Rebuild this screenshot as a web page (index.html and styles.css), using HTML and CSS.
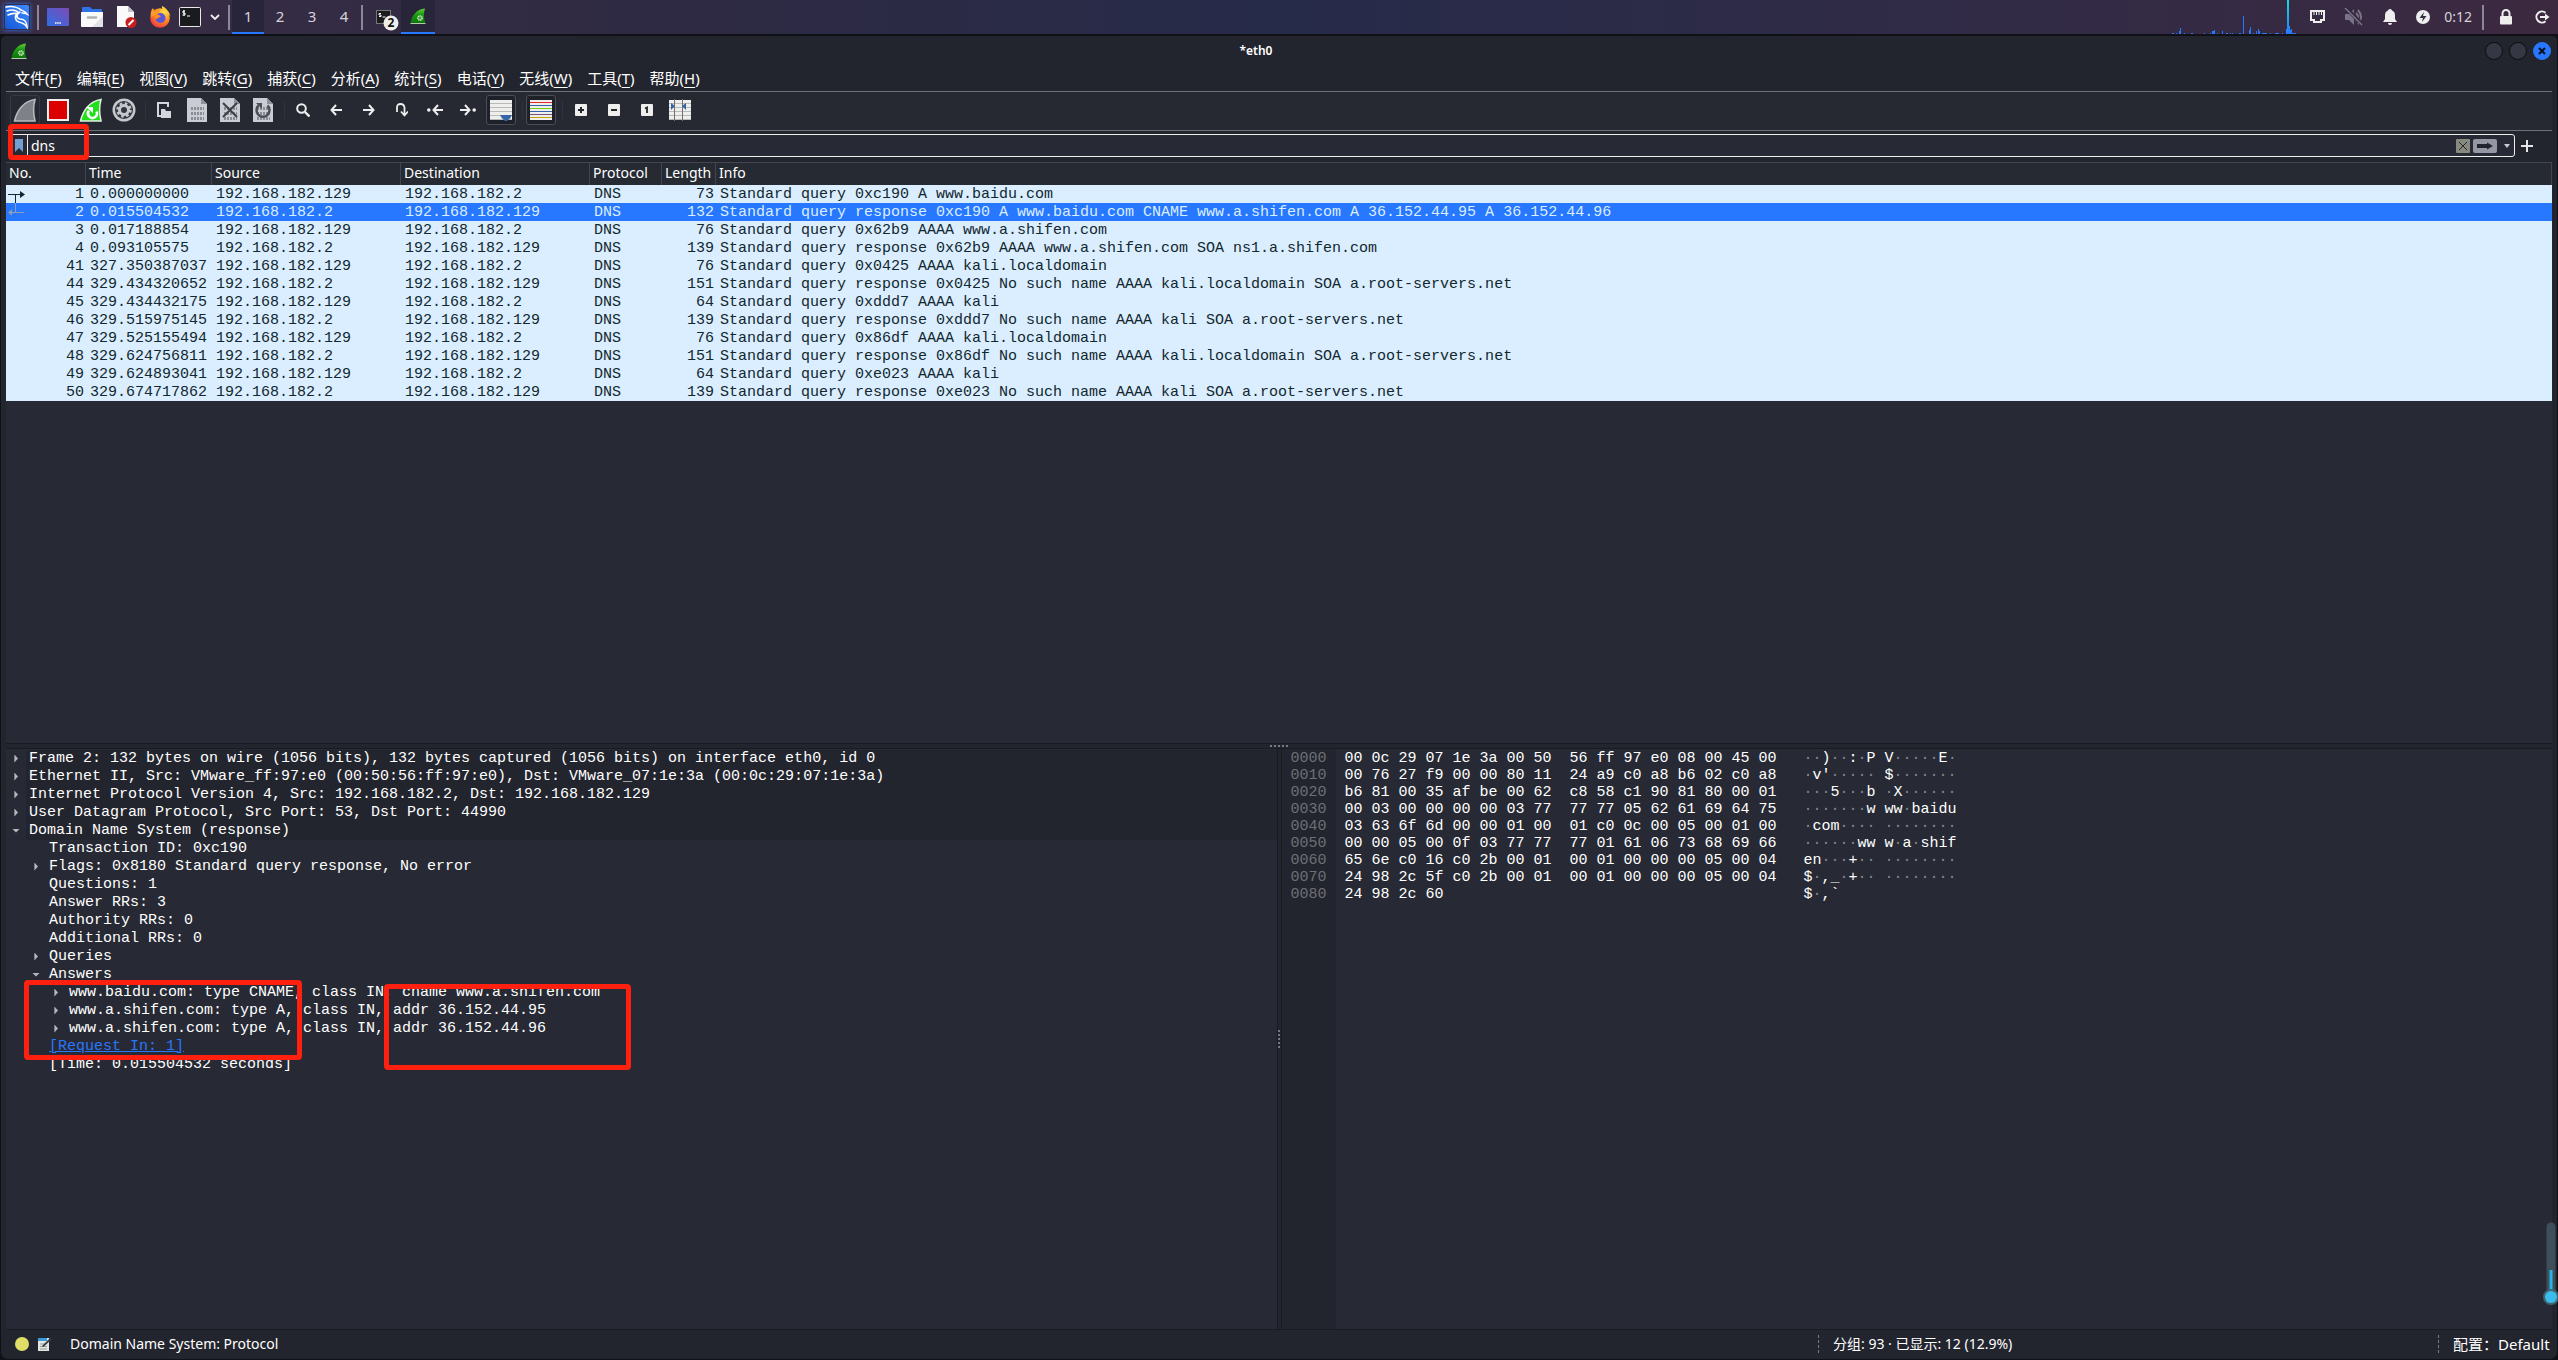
FILE: index.html
```html
<!DOCTYPE html>
<html lang="zh-CN">
<head>
<meta charset="utf-8">
<title>*eth0</title>
<link rel="stylesheet" href="styles.css">
</head>
<body>
<svg class="defs" aria-hidden="true">
  <defs>
    <linearGradient id="finGreen" x1="0" y1="0" x2="0" y2="1"><stop offset="0" stop-color="#5fd03a"/><stop offset=".4" stop-color="#1c9a12"/><stop offset="1" stop-color="#0d7408"/></linearGradient>
    <linearGradient id="kali" x1="0" y1="1" x2="1" y2="0"><stop offset="0" stop-color="#1557d8"/><stop offset="1" stop-color="#3d8bff"/></linearGradient>
    <linearGradient id="desk" x1="0" y1="1" x2="1" y2="0"><stop offset="0" stop-color="#2f6fe4"/><stop offset="1" stop-color="#7c4bb5"/></linearGradient>
    <radialGradient id="fox" cx=".7" cy=".2" r="1"><stop offset="0" stop-color="#ffe14a"/><stop offset=".45" stop-color="#ff8a1f"/><stop offset="1" stop-color="#e3204f"/></radialGradient>
    <linearGradient id="net" x1="0" y1="0" x2="0" y2="1"><stop offset="0" stop-color="#16e0e0"/><stop offset="1" stop-color="#2777ff"/></linearGradient>
    <symbol id="fin" viewBox="0 0 16 16"><path d="M.5 15.500C1.500 8 6.500 1 15 .5c-1.500 4-1.500 10 .5 15z" fill="url(#finGreen)"/><path d="M.5 15.500h15" stroke="#b9c9b5" stroke-width="1"/><circle cx="10" cy="10" r="2.200" fill="#4aa53c" stroke="#dff2da" stroke-width="1.300" stroke-dasharray="1.300 .5"/></symbol>
    <symbol id="doc" viewBox="0 0 20 24"><path d="M0 0h14l6 6v18H0z" fill="#c9cdd3"/><path d="M14 0v6h6z" fill="#8f949c"/><g stroke="#878c95" stroke-width="3" stroke-dasharray="2 1"><path d="M4 10.500h13M4 15.500h13M4 20.500h13"/></g></symbol>
  </defs>
</svg>

<header class="panel">
  <button class="pi kali" aria-label="Applications"><svg width="26" height="26" viewBox="0 0 26 26"><rect x="1" y="1" width="24" height="24" rx="2" fill="url(#kali)"/><path d="M2 3c5-1 11 0 15 3 2 1 4 1 6 4-2-1-4-1-5-1M3 7c5-2 9-1 12 2M4 11c4-2 7-2 10-1M16 8c-4 2-4 6 0 7 4 0 7 3 7 8-2-3-4-4-8-5-4-1-5-6-1-9" fill="none" stroke="#fff" stroke-width="1.600" stroke-linecap="round"/></svg></button>
  <i class="psep"></i>
  <button class="pi w34" aria-label="Show desktop"><svg width="22" height="18" viewBox="0 0 22 18"><rect width="22" height="18" rx="1" fill="url(#desk)"/><path d="M8 15h6" stroke="#fff" stroke-width="1.500" stroke-dasharray="1.500 .7"/></svg></button>
  <button class="pi w34" aria-label="Files"><svg width="22" height="20" viewBox="0 0 22 20"><path d="M1 7V1q0-1 1-1h7l2 2h9q1 0 1 1v4z" fill="#2f74e6"/><path d="M0 5h22v14q0 1-1 1H1q-1 0-1-1z" fill="#fafafa"/><path d="M22 9v11H11z" fill="#e2e2e4"/><path d="M7 10.500h8" stroke="#b2b2b2" stroke-width="2.500" stroke-linecap="round"/></svg></button>
  <button class="pi w34" aria-label="Text editor"><svg width="22" height="22" viewBox="0 0 22 22"><path d="M2 0h11l6 6v15H2z" fill="#fafafa"/><path d="M13 0v6h6z" fill="#c4c4c6"/><circle cx="16" cy="16.500" r="5.500" fill="#c81e1e"/><path d="M13.500 19l5-5" stroke="#fff" stroke-width="2"/></svg></button>
  <button class="pi w34" aria-label="Firefox"><svg width="22" height="22" viewBox="0 0 22 22"><circle cx="11" cy="12" r="9.800" fill="url(#fox)"/><path d="M2 11C1 6 3 3 4 2l2 4c2-2 3-3 5-2l-1 4z" fill="#ff9a2a"/><circle cx="11.500" cy="12" r="5" fill="#5a55d6"/><path d="M5 9c3-2 5 0 7 1-1 2-3 1-4 3-2 0-3-2-3-4z" fill="#ff8a1f"/><path d="M13 0c4 2 8 6 8.500 11-1-3-4-5-6-6-2-1-3-3-2.500-5z" fill="#ffcf3a"/></svg></button>
  <button class="pi w26" aria-label="Terminal"><svg width="22" height="20" viewBox="0 0 22 20"><rect x=".5" y=".5" width="21" height="19" rx="1" fill="#191b1f" stroke="#e8e8e8"/><path d="M6 4H4v2h2v2H3.500M5 3v6M8 9h3" fill="none" stroke="#fff" stroke-width="1"/></svg></button>
  <button class="pi w24" aria-label="More terminals"><svg width="10" height="6" viewBox="0 0 10 6"><path d="M1 1l4 4 4-4" fill="none" stroke="#eee" stroke-width="1.800"/></svg></button>
  <i class="psep"></i>
  <nav class="spaces"><button class="on">1</button><button>2</button><button>3</button><button>4</button></nav>
  <i class="psep"></i>
  <button class="pi w36 term2" aria-label="Terminal, 2 windows"><svg width="24" height="28" viewBox="0 0 24 28"><rect x=".5" y="7.500" width="14" height="13" fill="#191b1f" stroke="#777"/><path d="M5 10.500H3V12h2v1.500H3M6.500 14h3" fill="none" stroke="#fff"/><circle cx="15" cy="20" r="7.500" fill="#eeeeec"/></svg><b>2</b></button>
  <button class="pi w34 on" aria-label="Wireshark"><svg width="16" height="16"><use href="#fin"/></svg></button>
  <span class="grow"></span>
  <svg class="graph" width="126" height="34" viewBox="0 0 126 34"><g fill="#2777ff"><path d="M0 33h2v1H0zM4 33h1v1H4zM7 31h1v-3h1v6H7zM12 33h1v1h-1zM19 33h2v1h-2zM32 33h1v1h-1zM38 33h1v1h-1zM40 31h2v-1h1v4h-3zM45 33h1v1h-1zM50 31h1v3h-1zM54 33h2v1h-2zM58 33h1v1h-1zM60 33h1v1h-1zM67 33h2v1h-2zM77 30h1v-3h1v7h-2zM81 33h1v1h-1zM84 31h1v3h-1zM86 29h1v2h1v3h-2zM90 33h5v1h-5zM98 33h1v1h-1zM103 33h4v1h-4zM110 33h1v1h-1zM120 33h4v1h-4z"/><rect x="71" y="16" width="1" height="18"/></g><path d="M114 34v-5h1V0h2v26h1v4h1v-1h1v5z" fill="url(#net)"/></svg>
  <div class="tray">
    <svg width="15" height="14" viewBox="0 0 15 14"><path d="M1 1h13v9h-3v2H4v-2H1z" fill="none" stroke="#eee" stroke-width="2"/><path d="M4 2v3M6.500 2v3M9 2v3M11.500 2v3" stroke="#eee"/></svg>
    <svg width="20" height="18" viewBox="0 0 20 18"><path d="M1 6h4l5-5v16l-5-5H1z" fill="#7a7284"/><path d="M12 5q4 4 0 8M14 2q6 7 0 14" fill="none" stroke="#7a7284" stroke-width="2"/><path d="M2 0l17 17" stroke="#352b44" stroke-width="4"/><path d="M1 0l17 17" stroke="#7a7284" stroke-width="1.500"/></svg>
    <svg width="14" height="16" viewBox="0 0 14 16"><path d="M7 0q2 0 2 1.500 3 1 3 5V10l2 3H0l2-3V6.500q0-4 3-5Q5 0 7 0zM5 14h4q0 2-2 2t-2-2z" fill="#eee"/></svg>
    <svg width="14" height="14" viewBox="0 0 14 14"><circle cx="7" cy="7" r="7" fill="#eee"/><path d="M8 2L3.500 8H7l-1 4 4.500-6H7z" fill="#352b44"/></svg>
  </div>
  <time class="clock">0:12</time>
  <i class="psep"></i>
  <button class="pi lock" aria-label="Lock"><svg width="14" height="16" viewBox="0 0 14 16"><path d="M3.500 7V4.500a3.500 3.500 0 0 1 7 0V7" fill="none" stroke="#eee" stroke-width="2"/><rect x="1" y="7" width="12" height="8.500" rx="1" fill="#eee"/></svg></button>
  <button class="pi out" aria-label="Log out"><svg width="15" height="14" viewBox="0 0 15 14"><path d="M10.500 2.800A5.500 5.500 0 1 0 10.500 11.200" fill="none" stroke="#eee" stroke-width="2"/><path d="M5 7h6" stroke="#eee" stroke-width="2"/><path d="M10 3.500L14.500 7 10 10.500z" fill="#eee"/></svg></button>
</header>

<main class="window">
  <div class="title">
    <svg width="16" height="16"><use href="#fin"/></svg>
    <h1>*eth0</h1>
    <div class="wbtns"><button aria-label="Minimize"></button><button aria-label="Maximize"></button><button class="close" aria-label="Close"><svg width="8" height="8" viewBox="0 0 8 8"><path d="M1 1l6 6M7 1L1 7" stroke="#0b1020" stroke-width="2"/></svg></button></div>
  </div>

  <nav class="menu">
    <button>文件(<u>F</u>)</button><button>编辑(<u>E</u>)</button><button>视图(<u>V</u>)</button><button>跳转(<u>G</u>)</button><button>捕获(<u>C</u>)</button><button>分析(<u>A</u>)</button><button>统计(<u>S</u>)</button><button>电话(<u>Y</u>)</button><button>无线(<u>W</u>)</button><button>工具(<u>T</u>)</button><button>帮助(<u>H</u>)</button>
  </nav>

  <div class="tools">
    <button class="framed dim" aria-label="Start capture"><svg width="24" height="24" viewBox="0 0 24 24"><path d="M1.500 23C4 12 11 3 22 1.500c-2 7-1.500 15 0 21.500z" fill="#7e8187" stroke="#b9bcc1" stroke-width="1.500"/></svg></button>
    <button aria-label="Stop capture"><svg width="22" height="22" viewBox="0 0 22 22"><rect x="1" y="1" width="20" height="20" fill="#dc0000" stroke="#eeeeec" stroke-width="2"/></svg></button>
    <button aria-label="Restart capture"><svg width="24" height="24" viewBox="0 0 24 24"><path d="M1.500 23C4 12 11 3 22 1.500c-2 7-1.500 15 0 21.500z" fill="#1fe01a" stroke="#e6eee4" stroke-width="1.500"/><path d="M10 12.500a4.500 4.500 0 1 0 7.500 1" fill="none" stroke="#fff" stroke-width="2.500"/><path d="M7 9h7v6z" fill="#fff"/></svg></button>
    <button aria-label="Capture options"><svg width="24" height="24" viewBox="0 0 24 24"><circle cx="12" cy="12" r="11.500" fill="#c5c8cd"/><circle cx="12" cy="12" r="9" fill="#34373f"/><circle cx="12" cy="12" r="6.500" fill="none" stroke="#c5c8cd" stroke-width="2.500" stroke-dasharray="2.600 2.500"/><circle cx="12" cy="12" r="4.500" fill="none" stroke="#c5c8cd" stroke-width="3"/></svg></button>
    <i></i>
    <button aria-label="Open"><svg width="14" height="16" viewBox="0 0 14 16"><path d="M5 14H1V1h10v4" fill="none" stroke="#d3d6db" stroke-width="2"/><path d="M4 7h4l1 2h5v7H4z" fill="#d3d6db"/></svg></button>
    <button aria-label="Save"><svg width="20" height="24"><use href="#doc"/></svg></button>
    <button aria-label="Close file"><svg width="20" height="24"><use href="#doc"/><path d="M3 5l14 14M17 5L3 19" stroke="#3c3f46" stroke-width="2"/></svg></button>
    <button aria-label="Reload"><svg width="20" height="24"><use href="#doc"/><path d="M14.500 7.500a6.500 6.500 0 1 1-9 0" fill="none" stroke="#4b4e56" stroke-width="2.500"/><path d="M3 5h6v6z" fill="#4b4e56"/></svg></button>
    <i></i>
    <button aria-label="Find"><svg width="14" height="14" viewBox="0 0 14 14"><circle cx="5.500" cy="5.500" r="4.300" fill="none" stroke="#eee" stroke-width="2"/><path d="M9 9l4.500 4.500" stroke="#eee" stroke-width="2.400"/></svg></button>
    <button aria-label="Back"><svg width="12" height="12" viewBox="0 0 12 12"><path d="M12 6H2M6 1L1.500 6 6 11" fill="none" stroke="#eee" stroke-width="2"/></svg></button>
    <button aria-label="Forward"><svg width="12" height="12" viewBox="0 0 12 12"><path d="M0 6h10M6 1l4.500 5L6 11" fill="none" stroke="#eee" stroke-width="2"/></svg></button>
    <button aria-label="Go to packet"><svg width="12" height="14" viewBox="0 0 12 14"><path d="M1 9V4.500Q1 1 4.500 1T8.500 4.500V11M5 8.500l3.500 4 3.500-4" fill="none" stroke="#eee" stroke-width="1.800"/></svg></button>
    <button aria-label="First packet"><svg width="16" height="12" viewBox="0 0 16 12"><circle cx="1.800" cy="6" r="1.800" fill="#eee"/><path d="M16 6H7M11 1L6.500 6 11 11" fill="none" stroke="#eee" stroke-width="2"/></svg></button>
    <button aria-label="Last packet"><svg width="16" height="12" viewBox="0 0 16 12"><circle cx="14.200" cy="6" r="1.800" fill="#eee"/><path d="M0 6h9M5 1l4.500 5L5 11" fill="none" stroke="#eee" stroke-width="2"/></svg></button>
    <button class="framed" aria-label="Auto scroll"><svg width="22" height="21" viewBox="0 0 22 21"><path d="M0 0h22v20H0z" fill="#eeeeec"/><path d="M0 3.500h22M0 7.500h22M0 11.500h22M0 15.500h22M0 19.500h22" stroke="#b9bab7"/><path d="M10 15h12q-1 3-5 6h-2q-4-3-5-6z" fill="#3465a4"/></svg></button>
    <i></i>
    <button class="framed" aria-label="Colorize"><svg width="22" height="20" viewBox="0 0 22 20"><path d="M0 0h22v20H0z" fill="#eeeeec"/><path d="M0 2.500h22" stroke="#ef2929"/><path d="M0 5.500h22" stroke="#3465a4"/><path d="M0 8.500h22" stroke="#73d216"/><path d="M0 11.500h22" stroke="#3465a4"/><path d="M0 14.500h22" stroke="#75507b"/><path d="M0 17.500h22" stroke="#c4a000"/></svg></button>
    <i></i>
    <button aria-label="Zoom in"><svg width="12" height="12" viewBox="0 0 12 12"><rect width="12" height="12" rx="1" fill="#eeeeec"/><path d="M3 6h6M6 3v6" stroke="#23252e" stroke-width="2"/></svg></button>
    <button aria-label="Zoom out"><svg width="12" height="12" viewBox="0 0 12 12"><rect width="12" height="12" rx="1" fill="#eeeeec"/><path d="M3 6h6" stroke="#23252e" stroke-width="2"/></svg></button>
    <button aria-label="Normal size"><svg width="12" height="12" viewBox="0 0 12 12"><rect width="12" height="12" rx="1" fill="#eeeeec"/><path d="M4 4.500L6 3.500V9" fill="none" stroke="#23252e" stroke-width="1.800"/></svg></button>
    <button aria-label="Resize columns"><svg width="22" height="22" viewBox="0 0 22 22"><path d="M0 1h22v20H0z" fill="#eeeeec"/><path d="M0 4.500h22M0 8.500h22M0 12.500h22M0 16.500h22M0 20.500h22" stroke="#b9bab7"/><path d="M5.500 0v22M13.500 0v22" stroke="#6f716e"/><path d="M2 4l4 3-4 4zM17 4l-4 3 4 4z" fill="#3465a4"/></svg></button>
  </div>

  <form class="filter">
    <div class="field">
      <svg width="8" height="13" viewBox="0 0 8 13"><path d="M0 0h8v13l-4-4-4 4z" fill="#729fcf"/></svg>
      <input type="text" value="dns" aria-label="Display filter">
      <button type="button" class="clear" aria-label="Clear"><svg width="14" height="14" viewBox="0 0 14 14"><rect width="14" height="14" rx="1" fill="#888a80"/><path d="M3 3l8 8M11 3l-8 8" stroke="#23252e"/></svg></button>
      <button type="button" class="apply" aria-label="Apply"><svg width="24" height="14" viewBox="0 0 24 14"><rect width="24" height="14" rx="2" fill="#9598a3"/><path d="M4 5h10V3.500L20 7l-6 3.500V9H4z" fill="#23252e"/></svg></button>
      <button type="button" class="recent" aria-label="Recent filters"><svg width="6" height="4" viewBox="0 0 6 4"><path d="M0 0h6L3 4z" fill="#c9cbd0"/></svg></button>
    </div>
    <button type="button" class="add" aria-label="Add filter button"><svg width="12" height="12" viewBox="0 0 12 12"><path d="M0 6h12M6 0v12" stroke="#e6e6e6" stroke-width="2"/></svg></button>
    <span class="mark mark-filter"></span>
  </form>

  <section class="packets">
    <table>
      <colgroup><col class="c-no"><col class="c-time"><col class="c-src"><col class="c-dst"><col class="c-proto"><col class="c-len"><col></colgroup>
      <thead><tr><th>No.</th><th>Time</th><th>Source</th><th>Destination</th><th>Protocol</th><th>Length</th><th>Info</th></tr></thead>
      <tbody>
        <tr><td>1<svg class="rel" width="18" height="32" viewBox="0 0 18 32"><path d="M0 9.500h13M7.500 9.500v8.500" fill="none" stroke="#12272e"/><path d="M12 6l5 3.500-5 3.500z" fill="#12272e"/><path d="M7.500 18v9M2 27.500h14" fill="none" stroke="#8f9db8"/><path d="M4 24.500v6l-4-3z" fill="#8f9db8"/></svg></td><td>0.000000000</td><td>192.168.182.129</td><td>192.168.182.2</td><td>DNS</td><td>73</td><td>Standard query 0xc190 A www.baidu.com</td></tr>
        <tr class="sel"><td>2</td><td>0.015504532</td><td>192.168.182.2</td><td>192.168.182.129</td><td>DNS</td><td>132</td><td>Standard query response 0xc190 A www.baidu.com CNAME www.a.shifen.com A 36.152.44.95 A 36.152.44.96</td></tr>
        <tr><td>3</td><td>0.017188854</td><td>192.168.182.129</td><td>192.168.182.2</td><td>DNS</td><td>76</td><td>Standard query 0x62b9 AAAA www.a.shifen.com</td></tr>
        <tr><td>4</td><td>0.093105575</td><td>192.168.182.2</td><td>192.168.182.129</td><td>DNS</td><td>139</td><td>Standard query response 0x62b9 AAAA www.a.shifen.com SOA ns1.a.shifen.com</td></tr>
        <tr><td>41</td><td>327.350387037</td><td>192.168.182.129</td><td>192.168.182.2</td><td>DNS</td><td>76</td><td>Standard query 0x0425 AAAA kali.localdomain</td></tr>
        <tr><td>44</td><td>329.434320652</td><td>192.168.182.2</td><td>192.168.182.129</td><td>DNS</td><td>151</td><td>Standard query response 0x0425 No such name AAAA kali.localdomain SOA a.root-servers.net</td></tr>
        <tr><td>45</td><td>329.434432175</td><td>192.168.182.129</td><td>192.168.182.2</td><td>DNS</td><td>64</td><td>Standard query 0xddd7 AAAA kali</td></tr>
        <tr><td>46</td><td>329.515975145</td><td>192.168.182.2</td><td>192.168.182.129</td><td>DNS</td><td>139</td><td>Standard query response 0xddd7 No such name AAAA kali SOA a.root-servers.net</td></tr>
        <tr><td>47</td><td>329.525155494</td><td>192.168.182.129</td><td>192.168.182.2</td><td>DNS</td><td>76</td><td>Standard query 0x86df AAAA kali.localdomain</td></tr>
        <tr><td>48</td><td>329.624756811</td><td>192.168.182.2</td><td>192.168.182.129</td><td>DNS</td><td>151</td><td>Standard query response 0x86df No such name AAAA kali.localdomain SOA a.root-servers.net</td></tr>
        <tr><td>49</td><td>329.624893041</td><td>192.168.182.129</td><td>192.168.182.2</td><td>DNS</td><td>64</td><td>Standard query 0xe023 AAAA kali</td></tr>
        <tr><td>50</td><td>329.674717862</td><td>192.168.182.2</td><td>192.168.182.129</td><td>DNS</td><td>139</td><td>Standard query response 0xe023 No such name AAAA kali SOA a.root-servers.net</td></tr>
      </tbody>
    </table>
  </section>

  <div class="split-h"><span></span></div>

  <div class="lower">
    <section class="details">
      <ul class="tree">
        <li class="top closed"><span>Frame 2: 132 bytes on wire (1056 bits), 132 bytes captured (1056 bits) on interface eth0, id 0</span></li>
        <li class="top closed"><span>Ethernet II, Src: VMware_ff:97:e0 (00:50:56:ff:97:e0), Dst: VMware_07:1e:3a (00:0c:29:07:1e:3a)</span></li>
        <li class="top closed"><span>Internet Protocol Version 4, Src: 192.168.182.2, Dst: 192.168.182.129</span></li>
        <li class="top closed"><span>User Datagram Protocol, Src Port: 53, Dst Port: 44990</span></li>
        <li class="top open"><span>Domain Name System (response)</span></li>
        <li class="l1"><span>Transaction ID: 0xc190</span></li>
        <li class="l1 closed"><span>Flags: 0x8180 Standard query response, No error</span></li>
        <li class="l1"><span>Questions: 1</span></li>
        <li class="l1"><span>Answer RRs: 3</span></li>
        <li class="l1"><span>Authority RRs: 0</span></li>
        <li class="l1"><span>Additional RRs: 0</span></li>
        <li class="l1 closed"><span>Queries</span></li>
        <li class="l1 open"><span>Answers</span></li>
        <li class="l2 closed"><span>www.baidu.com: type CNAME, class IN, cname www.a.shifen.com</span></li>
        <li class="l2 closed"><span>www.a.shifen.com: type A, class IN, addr 36.152.44.95</span></li>
        <li class="l2 closed"><span>www.a.shifen.com: type A, class IN, addr 36.152.44.96</span></li>
        <li class="l1"><span><a href="#">[Request In: 1]</a></span></li>
        <li class="l1"><span>[Time: 0.015504532 seconds]</span></li>
      </ul>
      <span class="mark mark-names"></span>
      <span class="mark mark-addrs"></span>
    </section>
    <div class="split-v"><span></span></div>
    <section class="bytes">
<pre class="offs">0000
0010
0020
0030
0040
0050
0060
0070
0080</pre>
<pre class="hex">00 0c 29 07 1e 3a 00 50  56 ff 97 e0 08 00 45 00
00 76 27 f9 00 00 80 11  24 a9 c0 a8 b6 02 c0 a8
b6 81 00 35 af be 00 62  c8 58 c1 90 81 80 00 01
00 03 00 00 00 00 03 77  77 77 05 62 61 69 64 75
03 63 6f 6d 00 00 01 00  01 c0 0c 00 05 00 01 00
00 00 05 00 0f 03 77 77  77 01 61 06 73 68 69 66
65 6e c0 16 c0 2b 00 01  00 01 00 00 00 05 00 04
24 98 2c 5f c0 2b 00 01  00 01 00 00 00 05 00 04
24 98 2c 60</pre>
<pre class="ascii"><s>··</s>)<s>··</s>:<s>·</s>P V<s>·····</s>E<s>·</s>
<s>·</s>v'<s>·····</s> $<s>·······</s>
<s>···</s>5<s>···</s>b <s>·</s>X<s>······</s>
<s>·······</s>w ww<s>·</s>baidu
<s>·</s>com<s>····</s> <s>········</s>
<s>······</s>ww w<s>·</s>a<s>·</s>shif
en<s>···</s>+<s>··</s> <s>········</s>
$<s>·</s>,_<s>·</s>+<s>··</s> <s>········</s>
$<s>·</s>,`</pre>
    </section>
  </div>

  <footer class="status">
    <div class="st-left"><i class="lamp"></i><svg width="14" height="14" viewBox="0 0 14 14"><path d="M0 1h11v13H0z" fill="#e4e6e4"/><path d="M0 1h9v3H0z" fill="#3a9ad9"/><path d="M2 7h6M2 9.500h7M2 12h7" stroke="#9a9c9a"/><path d="M4 9L12 1l1.500 1.500-8 7.500z" fill="#3b3e44"/></svg><span>Domain Name System: Protocol</span></div>
    <div class="st-mid">分组: 93 · 已显示: 12 (12.9%)</div>
    <div class="st-right">配置：Default</div>
  </footer>
</main>
<svg class="slider" width="16" height="86" viewBox="0 0 16 86"><path d="M8 5v70" stroke="#3f4f5a" stroke-width="9" stroke-linecap="round"/><path d="M8 48v26" stroke="#29b4e8" stroke-width="3"/><circle cx="8" cy="75" r="8" fill="#3f6474"/><circle cx="8" cy="75" r="6" fill="#3bbcea"/></svg>
</body>
</html>
```
FILE: styles.css
```css
* { box-sizing: border-box; }
html, body { height: 100%; }
body {
  margin: 0;
  display: flex;
  flex-direction: column;
  background: #0f1116;
  color: #fff;
  font: 14px/20px "Noto Sans", "Noto Sans CJK SC", sans-serif;
  overflow: hidden;
  position: relative;
}
button { margin: 0; padding: 0; border: 0; background: none; color: inherit; font: inherit; }
svg { display: block; flex: none; }
.defs { position: absolute; width: 0; height: 0; }

/* desktop panel */
.panel {
  flex: none;
  height: 34px;
  display: flex;
  align-items: center;
  padding: 0 7px 0 4px;
  background: linear-gradient(90deg, #392d45 0, #2f2a43 25%, #262b49 50%, #322b46 80%, #3c2940 100%);
}
.pi { height: 34px; display: flex; align-items: center; justify-content: center; }
.kali { width: 26px; margin-right: 6px; }
.kali svg { box-shadow: 0 0 4px #2777ff; }
.w24 { width: 24px; }
.w26 { width: 26px; }
.w34 { width: 34px; }
.w36 { width: 36px; }
.pi.on { background: #28243a; border-bottom: 2px solid #2777ff; }
.psep { width: 2px; height: 25px; margin: 0 2px 0 1px; background: #8d8795; }
.spaces { display: flex; }
.spaces button { width: 32px; height: 34px; color: #d5d3da; font-size: 15px; border-bottom: 2px solid transparent; }
.spaces .on { background: #28243a; border-bottom-color: #2777ff; }
.term2 { position: relative; padding-left: 10px; }
.term2 b { position: absolute; left: 22px; top: 14px; width: 8px; text-align: center; font-size: 12px; line-height: 18px; color: #111; }
.grow { flex: 1; }
.graph { margin-right: 12px; }
.tray { display: flex; align-items: center; gap: 19px; }
.clock { margin: 0 9px 0 14px; color: #d5d3da; }
.lock { width: 34px; margin-left: 6px; margin-right: 7px; padding-right: 6px; }
.out { width: 18px; }

/* window frame */
.window {
  flex: 1;
  min-height: 0;
  display: flex;
  flex-direction: column;
  padding: 0 5px;
  background: #23252e;
  border: solid #0f1116;
  border-width: 2px 1px 1px;
  border-radius: 6px 6px 8px 8px;
}
.title {
  flex: none;
  height: 30px;
  display: flex;
  align-items: center;
  padding: 0 1px 0 5px;
}
.title h1 { flex: 1; margin: 0; text-align: center; font-size: 12px; font-weight: 600; line-height: 18px; }
.wbtns { display: flex; gap: 6px; }
.wbtns button {
  width: 18px;
  height: 18px;
  border: 1px solid #0b0c10;
  border-radius: 50%;
  background: #353844;
  display: grid;
  place-items: center;
}
.wbtns .close { background: #2777ff; border-color: #2777ff; }

.menu { flex: none; height: 26px; display: flex; gap: 15px; padding: 2px 9px 3px; font-size: 15px; border-bottom: 1px solid #6f7179; }
.menu button { flex: none; white-space: nowrap; }
.menu u { text-underline-offset: 3px; }

.tools {
  flex: none;
  height: 39px;
  display: flex;
  align-items: center;
  gap: 3px;
  padding: 0 4px 2px;
  background: #272932;
  border-bottom: 1px solid #6f7179;
}
.tools button { width: 30px; height: 30px; display: grid; place-items: center; border-radius: 3px; }
.tools .framed { border: 1px solid #4a4d57; background: #1f2129; }
.tools .dim { border-color: #363943; background: none; }
.tools i { width: 4px; height: 18px; border-right: 1px solid #30333d; }

.filter { flex: none; position: relative; display: flex; align-items: center; padding: 3px 13px 5px 4px; }
.field {
  flex: 1;
  height: 23px;
  display: flex;
  align-items: center;
  padding: 0 4px;
  background: #272a34;
  border: 1px solid #eeeeec;
  border-radius: 3px;
}
.field input {
  flex: 1;
  min-width: 0;
  height: 21px;
  margin-left: 4px;
  padding: 0 0 1px 3px;
  border: 0;
  border-left: 1px solid #eeeeec;
  background: none;
  color: #fff;
  font: inherit;
  outline: none;
}
.apply { margin: 0 7px 0 3px; }
.add { width: 24px; display: grid; place-items: center; }
.mark { position: absolute; border: 5px solid #ff2010; border-radius: 4px; }
.mark-filter { left: 2px; top: -7px; width: 81px; height: 36px; }

/* packet list */
.packets { flex: 1 1 0; min-height: 0; overflow: hidden; background: #272a34; border-bottom: 1px solid #191b21; }
table { width: 100%; table-layout: fixed; border-collapse: separate; border-spacing: 0; }
.c-no { width: 80px; }
.c-time { width: 126px; }
.c-src { width: 189px; }
.c-dst { width: 189px; }
.c-proto { width: 72px; }
.c-len { width: 54px; }
th {
  height: 23px;
  padding: 0 0 2px 3px;
  text-align: left;
  font-weight: 400;
  line-height: 20px;
  background: #262a32;
  border: solid #43464f;
  border-width: 1px 1px 0 0;
}
td {
  height: 18px;
  padding: 1px 2px 0 4px;
  font: 15px/17px "Liberation Mono", monospace;
  white-space: pre;
  background: #daeeff;
  color: #12272e;
}
td:nth-child(1), td:nth-child(6) { text-align: right; }
td:first-child { position: relative; }
tbody tr:first-child td:first-child { z-index: 1; }
.rel { position: absolute; left: 2px; top: 0; }
.sel td { background: #2777ff; color: #daeeff; }

.split-h { flex: none; height: 5px; display: flex; justify-content: center; align-items: center; border-bottom: 1px solid #191b21; }
.split-h span { width: 18px; border-top: 2px dotted #777a83; }
.split-v { flex: none; width: 5px; display: flex; justify-content: center; align-items: center; border: solid #191b21; border-width: 0 1px; }
.split-v span { height: 18px; border-left: 2px dotted #777a83; }

/* details and bytes */
.lower { flex: 1 1 0; min-height: 0; display: flex; }
.details { flex: 1 1 0; min-width: 0; position: relative; background: #272a34; }
.tree { list-style: none; margin: 0; padding: 1px 0 0; font: 15px/18px "Liberation Mono", monospace; }
.tree li { display: flex; align-items: center; height: 18px; }
.tree li::before { content: ""; flex: none; width: 8px; margin: 0 6px; }
.tree .closed::before { height: 8px; background: #b5b7bc; clip-path: polygon(30% 0, 75% 50%, 30% 100%); }
.tree .open::before { height: 4px; background: #b5b7bc; clip-path: polygon(0 0, 100% 0, 50% 100%); }
.tree span { flex: 1; padding-left: 3px; white-space: nowrap; }
.tree .top span { background: #23252e; }
.tree .l1 { padding-left: 20px; }
.tree .l2 { padding-left: 40px; }
.tree a { color: #2777ff; }
.mark-names { left: 18px; top: 231px; width: 278px; height: 80px; }
.mark-addrs { left: 378px; top: 235px; width: 247px; height: 86px; }

.bytes { flex: 1 1 0; min-width: 0; display: flex; background: #272a34; }
pre { margin: 0; padding: 1px 0 0; font: 15px/17px "Liberation Mono", monospace; color: #fff; }
.offs { width: 54px; padding-left: 9px; background: #23252e; color: #6d6f77; }
.hex { width: 468px; padding-left: 9px; }
.bytes s { text-decoration: none; color: #83858c; }

.status { flex: none; height: 30px; display: flex; align-items: center; padding-bottom: 2px; border-top: 1px solid #191b21; }
.status > div { height: 18px; display: flex; align-items: center; white-space: pre; }
.st-left { flex: 1; padding-left: 9px; }
.lamp { width: 14px; height: 14px; margin-right: 9px; border-radius: 50%; background: #dede68; }
.st-left span { margin-left: 18px; }
.status .st-mid { width: 620px; padding-left: 14px; border-left: 1px dashed #777a83; }
.status .st-right { width: 114px; padding-left: 14px; border-left: 1px dashed #777a83; font-family: "Noto Sans", "Noto Sans CJK JP", sans-serif; font-size: 15px; }

.slider { position: absolute; right: -1px; bottom: 52px; }
```
